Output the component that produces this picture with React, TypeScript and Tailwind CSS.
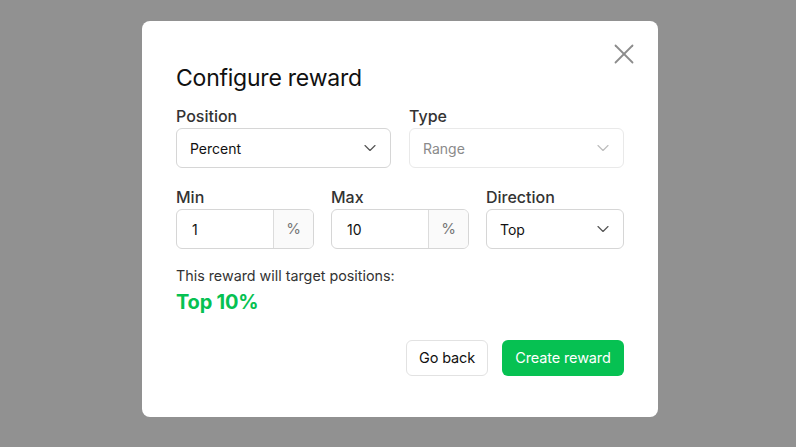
import { X, ChevronDown } from 'lucide-react';

const font = { fontFamily: 'Inter, "Noto Sans", sans-serif' };

const Label = ({ children }: { children: string }) => (
    <span className="block text-[16px] leading-[24px] font-medium text-[#333]">{children}</span>
);

const Select = ({ value, disabled }: { value: string; disabled?: boolean }) => (
    <div
        className={`flex h-10 items-center justify-between rounded-[6px] border bg-white pl-[13px] pr-[10px] text-[14px] ${
            disabled ? 'border-[#e9e9e9] text-[#8a8a8a]' : 'border-[#d6d6d6] text-[#111]'
        }`}
    >
        <span>{value}</span>
        <ChevronDown
            className={`h-5 w-5 ${disabled ? 'text-[#bdbdbd]' : 'text-[#555]'}`}
            strokeWidth={1.4}
        />
    </div>
);

const PercentInput = ({ value }: { value: string }) => (
    <div className="flex h-10 overflow-hidden rounded-[6px] border border-[#d6d6d6] bg-white text-[14px]">
        <span className="flex flex-1 items-center pl-[15px] text-[#111]">{value}</span>
        <span className="flex w-[40px] items-center justify-center border-l border-[#dcdcdc] bg-[#fafafa] text-[15px] text-[#777]">
            %
        </span>
    </div>
);

export default function App() {
    return (
        <div className="flex h-[447px] w-[796px] items-start justify-center bg-[#919191] pl-[4px] pt-[21px]" style={font}>
            <div className="relative w-[516px] rounded-[8px] bg-white px-[34px] pb-[41px] pt-[41px]">
                <button className="absolute right-[17px] top-[16px] text-[#8c8c8c]">
                    <X className="h-[34px] w-[34px]" strokeWidth={1.25} />
                </button>

                <h1 className="text-[23px] leading-[32px] font-normal tracking-[-0.01em] text-[#111]">Configure reward</h1>

                <div className="mt-[10px] grid grid-cols-2 gap-x-[18px]">
                    <div>
                        <Label>Position</Label>
                        <Select value="Percent" />
                    </div>
                    <div>
                        <Label>Type</Label>
                        <Select value="Range" disabled />
                    </div>
                </div>

                <div className="mt-[17px] grid grid-cols-3 gap-x-[17px]">
                    <div>
                        <Label>Min</Label>
                        <PercentInput value="1" />
                    </div>
                    <div>
                        <Label>Max</Label>
                        <PercentInput value="10" />
                    </div>
                    <div>
                        <Label>Direction</Label>
                        <Select value="Top" />
                    </div>
                </div>

                <p className="mt-[16px] text-[14.3px] leading-[22px] text-[#333]">This reward will target positions:</p>
                <p className="mt-[1px] text-[20px] leading-[28px] font-bold tracking-[-0.01em] text-[#06c152]">Top 10%</p>

                <div className="mt-[24px] flex justify-end gap-[14px]">
                    <button className="h-9 w-[82px] rounded-[6px] border border-[#e2e2e2] bg-white text-[14.5px] tracking-[-0.01em] text-[#111]">
                        Go back
                    </button>
                    <button className="h-9 w-[122px] rounded-[6px] bg-[#06c152] text-[14.5px] tracking-[-0.01em] text-white">
                        Create reward
                    </button>
                </div>
            </div>
        </div>
    );
}
